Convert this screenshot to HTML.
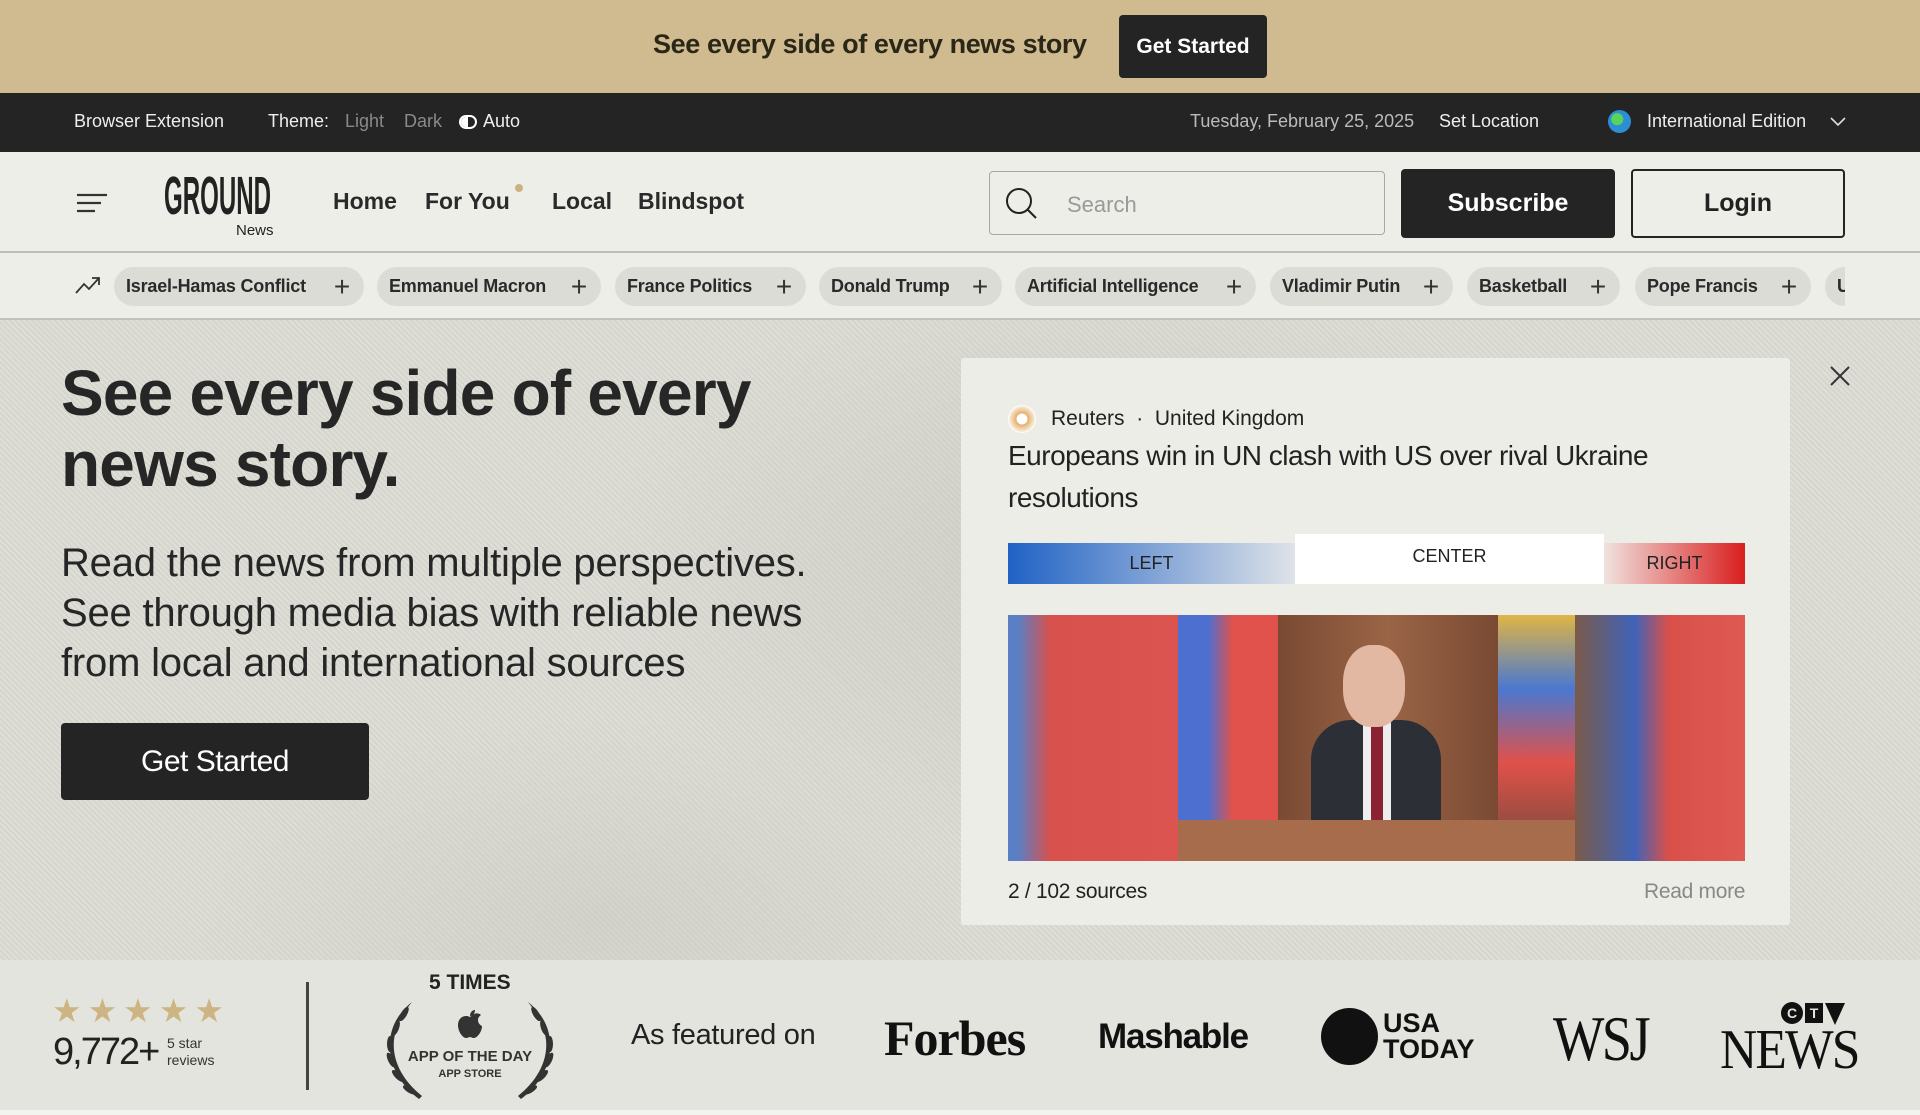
<!DOCTYPE html>
<html><head><meta charset="utf-8">
<style>
*{margin:0;padding:0;box-sizing:border-box}
body{width:1920px;height:1115px;overflow:hidden;font-family:"Liberation Sans",sans-serif;background:#e6e6e0;color:#222;position:relative}
.abs{position:absolute}
#banner{left:0;top:0;width:1920px;height:93px;background:#cfbb8f}
#dark{left:0;top:93px;width:1920px;height:59px;background:#242424;color:#eee;font-size:18px}
#nav{left:0;top:152px;width:1920px;height:101px;background:#eeeee9;border-bottom:2px solid #bdbdb8}
#topics{left:0;top:253px;width:1920px;height:67px;background:#eeeee9;border-bottom:2px solid #c2c2bc}
.pill{position:absolute;top:14px;height:39px;border-radius:20px;background:#dcdcd6;font-size:18px;font-weight:bold;color:#2a2a2a;line-height:39px;padding-left:12px;white-space:nowrap;overflow:hidden;letter-spacing:-0.2px}
.pill span.p{position:absolute;right:14px;top:0;font-weight:normal;font-size:28px;color:#333}
#hero{left:0;top:320px;width:1920px;height:640px;background:
radial-gradient(ellipse 500px 300px at 1100px 250px,rgba(190,190,182,.45),transparent),
radial-gradient(ellipse 400px 200px at 600px 600px,rgba(200,200,192,.5),transparent),
repeating-linear-gradient(45deg,rgba(255,255,255,.08) 0 2px,rgba(0,0,0,.03) 2px 4px),#dcdcd5}
#foot{left:0;top:960px;width:1920px;height:150px;background:#e4e4de}
.logo{position:absolute;color:#111}
</style></head><body>

<div id="banner" class="abs">
  <div class="abs" style="left:653px;top:29px;font-size:27px;font-weight:bold;color:#2a2718;letter-spacing:-0.4px;white-space:nowrap">See every side of every news story</div>
  <div class="abs" style="left:1119px;top:15px;width:148px;height:63px;background:#242424;border-radius:4px;color:#fff;font-size:21px;font-weight:bold;text-align:center;line-height:63px">Get Started</div>
</div>

<div id="dark" class="abs">
  <div class="abs" style="left:74px;top:18px">Browser Extension</div>
  <div class="abs" style="left:268px;top:18px">Theme:</div>
  <div class="abs" style="left:345px;top:18px;color:#8a8a8a">Light</div>
  <div class="abs" style="left:404px;top:18px;color:#8a8a8a">Dark</div>
  <div class="abs" style="left:459px;top:22px;width:18px;height:14px;border:2px solid #fff;border-radius:7px;overflow:hidden"><div style="width:7px;height:14px;background:#fff"></div></div>
  <div class="abs" style="left:483px;top:18px">Auto</div>
  <div class="abs" style="left:1190px;top:18px;color:#bbb">Tuesday, February 25, 2025</div>
  <div class="abs" style="left:1439px;top:18px">Set Location</div>
  <div class="abs" style="left:1608px;top:17px;width:23px;height:23px;border-radius:50%;background:radial-gradient(circle at 40% 40%,#5bd35b 0 30%,#2c8fd6 32%)"></div>
  <div class="abs" style="left:1647px;top:18px">International Edition</div>
  <svg class="abs" style="left:1830px;top:24px" width="16" height="10"><path d="M1 1l7 7 7-7" stroke="#ddd" stroke-width="1.6" fill="none"/></svg>
</div>

<div id="nav" class="abs">
  <svg class="abs" style="left:77px;top:41px" width="30" height="20"><path d="M0 2h30M0 10h24M0 18h18" stroke="#333" stroke-width="2.2"/></svg>
  <svg class="abs" style="left:163px;top:22px" width="112" height="64">
    <text x="1" y="40" font-family="Liberation Sans" font-weight="bold" font-size="54" textLength="107" lengthAdjust="spacingAndGlyphs" fill="#222">GROUND</text>
    <text x="73" y="61" font-family="Liberation Sans" font-size="15" fill="#222">News</text>
  </svg>
  <div class="abs" style="left:333px;top:36px;font-size:23px;font-weight:bold;color:#2a2a2a">Home</div>
  <div class="abs" style="left:425px;top:36px;font-size:23px;font-weight:bold;color:#2a2a2a">For You</div>
  <div class="abs" style="left:515px;top:32px;width:8px;height:8px;border-radius:50%;background:#cbb283"></div>
  <div class="abs" style="left:552px;top:36px;font-size:23px;font-weight:bold;color:#2a2a2a">Local</div>
  <div class="abs" style="left:638px;top:36px;font-size:23px;font-weight:bold;color:#2a2a2a">Blindspot</div>
  <div class="abs" style="left:989px;top:19px;width:396px;height:64px;border:1.5px solid #a9a9a4;border-radius:4px;background:#eeeee9"></div>
  <svg class="abs" style="left:1004px;top:34px" width="34" height="34"><circle cx="15" cy="15" r="12" stroke="#222" stroke-width="2" fill="none"/><path d="M24 24l8 8" stroke="#222" stroke-width="2"/></svg>
  <div class="abs" style="left:1067px;top:40px;font-size:22px;color:#999">Search</div>
  <div class="abs" style="left:1401px;top:17px;width:214px;height:69px;background:#242424;border-radius:4px;color:#fff;font-size:25px;font-weight:bold;text-align:center;line-height:69px">Subscribe</div>
  <div class="abs" style="left:1631px;top:17px;width:214px;height:69px;border:2px solid #242424;border-radius:4px;color:#222;font-size:25px;font-weight:bold;text-align:center;line-height:65px">Login</div>
</div>

<div id="topics" class="abs">
  <svg class="abs" style="left:75px;top:22px" width="26" height="20"><path d="M1 18l8-9 5 5 10-11M17 3h7v7" stroke="#333" stroke-width="1.8" fill="none"/></svg>
  <div class="pill" style="left:114px;width:250px">Israel-Hamas Conflict<span class="p">+</span></div>
  <div class="pill" style="left:377px;width:224px">Emmanuel Macron<span class="p">+</span></div>
  <div class="pill" style="left:615px;width:191px">France Politics<span class="p">+</span></div>
  <div class="pill" style="left:819px;width:183px">Donald Trump<span class="p">+</span></div>
  <div class="pill" style="left:1015px;width:241px">Artificial Intelligence<span class="p">+</span></div>
  <div class="pill" style="left:1270px;width:183px">Vladimir Putin<span class="p">+</span></div>
  <div class="pill" style="left:1467px;width:153px">Basketball<span class="p">+</span></div>
  <div class="pill" style="left:1635px;width:176px">Pope Francis<span class="p">+</span></div>
  <div class="pill" style="left:1825px;width:20px;border-radius:20px 0 0 20px">U</div>
</div>

<div id="hero" class="abs">
  <div class="abs" style="left:61px;top:38px;font-size:64px;font-weight:bold;line-height:71px;color:#262626;letter-spacing:-0.8px;width:900px">See every side of every<br>news story.</div>
  <div class="abs" style="left:61px;top:218px;font-size:40px;line-height:50px;color:#262626;letter-spacing:-0.2px;width:900px">Read the news from multiple perspectives.<br>See through media bias with reliable news<br>from local and international sources</div>
  <div class="abs" style="left:61px;top:403px;width:308px;height:77px;background:#242424;border-radius:4px;color:#fff;font-size:30px;text-align:center;line-height:77px;letter-spacing:-0.5px">Get Started</div>

  <div class="abs" style="left:961px;top:38px;width:829px;height:567px;background:#ededE8;border-radius:3px"></div>
  <svg class="abs" style="left:1830px;top:46px" width="20" height="20"><path d="M1 1l18 18M19 1L1 19" stroke="#333" stroke-width="2"/></svg>
  <div class="abs" style="left:1008px;top:85px;width:28px;height:28px;border-radius:50%;background:radial-gradient(circle,#fff 0 25%,#e6b070 30%,#f5e5cc 60%,#fff 70%)"></div>
  <div class="abs" style="left:1051px;top:87px;font-size:21px;color:#222">Reuters&nbsp;&nbsp;·&nbsp;&nbsp;United Kingdom</div>
  <div class="abs" style="left:1008px;top:115px;font-size:28px;line-height:42px;color:#222;letter-spacing:-0.5px;width:720px">Europeans win in UN clash with US over rival Ukraine resolutions</div>
  <div class="abs" style="left:1008px;top:223px;width:287px;height:41px;background:linear-gradient(90deg,#1f62c4,#dfe3e8);text-align:center;line-height:41px;font-size:18px;color:#222">LEFT</div>
  <div class="abs" style="left:1295px;top:214px;width:309px;height:50px;background:#fff;text-align:center;line-height:44px;font-size:18px;color:#222">CENTER</div>
  <div class="abs" style="left:1604px;top:223px;width:141px;height:41px;background:linear-gradient(90deg,#f0e2de,#d91e1e);text-align:center;line-height:41px;font-size:18px;color:#222">RIGHT</div>
  <div class="abs" style="left:1008px;top:295px;width:737px;height:246px;overflow:hidden;background:#d9534e">
    <div class="abs" style="left:0;top:0;width:170px;height:246px;background:linear-gradient(90deg,#5b7fc4 0 6%,#d8514c 25%,#dc5450)"></div>
    <div class="abs" style="left:170px;top:0;width:397px;height:246px;background:#6a3a2a"></div>
    <div class="abs" style="left:170px;top:0;width:100px;height:246px;background:linear-gradient(90deg,#4d6fd0 0 30%,#e0524b 55%)"></div>
    <div class="abs" style="left:270px;top:0;width:220px;height:246px;background:linear-gradient(90deg,#7a4a33,#9a6446,#7a4a33)"></div>
    <div class="abs" style="left:490px;top:0;width:77px;height:246px;background:linear-gradient(180deg,#e0b545 0,#4a78d0 30%,#e0514a 60%,#6a4a3a 100%)"></div>
    <div class="abs" style="left:303px;top:105px;width:130px;height:115px;background:#2d2f36;border-radius:40px 40px 0 0"></div>
    <div class="abs" style="left:355px;top:105px;width:28px;height:110px;background:#eee"></div>
    <div class="abs" style="left:363px;top:110px;width:12px;height:100px;background:#8a2233"></div>
    <div class="abs" style="left:335px;top:30px;width:62px;height:82px;border-radius:45%;background:#e2b8a2"></div>
    <div class="abs" style="left:170px;top:205px;width:397px;height:41px;background:#a66c4c"></div>
    <div class="abs" style="left:567px;top:0;width:170px;height:246px;background:linear-gradient(90deg,#7a5a4a,#3f63b8 35%,#d9504a 55%,#de5a52)"></div>
  </div>
  <div class="abs" style="left:1008px;top:560px;font-size:21px;color:#222;letter-spacing:-0.3px">2 / 102 sources</div>
  <div class="abs" style="left:1644px;top:560px;font-size:21px;color:#888;letter-spacing:-0.3px">Read more</div>
</div>

<div id="foot" class="abs">
  <div class="abs" style="left:52px;top:31px;font-size:33px;color:#cdb483;letter-spacing:6px">★★★★★</div>
  <div class="abs" style="left:53px;top:71px;font-size:38px;color:#222;letter-spacing:-2px">9,772+</div>
  <div class="abs" style="left:167px;top:75px;font-size:14px;line-height:17px;color:#333">5 star<br>reviews</div>
  <div class="abs" style="left:306px;top:22px;width:3px;height:108px;background:#444"></div>
  <div class="abs" style="left:429px;top:11px;font-size:21px;font-weight:bold;color:#222">5 TIMES</div>
  <svg class="abs" style="left:374px;top:40px" width="192" height="104">
    <g fill="#333"><path d="M38 2c-8 10-16 22-18 38-2 20 8 40 28 56l-3 3C24 83 14 62 16 40 18 22 28 10 38 2z"/>
    <ellipse cx="30" cy="14" rx="3" ry="8" transform="rotate(30 30 14)"/><ellipse cx="22" cy="28" rx="3" ry="8" transform="rotate(20 22 28)"/><ellipse cx="16" cy="44" rx="3" ry="8"/><ellipse cx="17" cy="60" rx="3" ry="8" transform="rotate(-25 17 60)"/><ellipse cx="24" cy="76" rx="3" ry="8" transform="rotate(-45 24 76)"/><ellipse cx="36" cy="90" rx="3" ry="8" transform="rotate(-60 36 90)"/>
    <path d="M154 2c8 10 16 22 18 38 2 20-8 40-28 56l3 3c21-16 31-37 29-59-2-18-12-30-22-38z"/>
    <ellipse cx="162" cy="14" rx="3" ry="8" transform="rotate(-30 162 14)"/><ellipse cx="170" cy="28" rx="3" ry="8" transform="rotate(-20 170 28)"/><ellipse cx="176" cy="44" rx="3" ry="8"/><ellipse cx="175" cy="60" rx="3" ry="8" transform="rotate(25 175 60)"/><ellipse cx="168" cy="76" rx="3" ry="8" transform="rotate(45 168 76)"/><ellipse cx="156" cy="90" rx="3" ry="8" transform="rotate(60 156 90)"/>
    <path d="M96 17c-6-3-12 1-12 8s5 13 8 13c2 0 3-1 4-1s2 1 4 1c3 0 8-6 8-12-2-1-4-3-4-6s2-4 3-5c-2-2-5-2-7-1-1 1-3 2-4 3zM96 16c0-3 2-6 5-6 0 3-2 6-5 6z"/></g>
    <text x="96" y="61" text-anchor="middle" font-family="Liberation Sans" font-weight="bold" font-size="15" fill="#333">APP OF THE DAY</text>
    <text x="96" y="77" text-anchor="middle" font-family="Liberation Sans" font-weight="bold" font-size="11" fill="#333">APP STORE</text>
  </svg>
  <div class="abs" style="left:631px;top:59px;font-size:29px;color:#222;letter-spacing:-0.3px">As featured on</div>
  <div class="logo" style="left:884px;top:49px;font-family:'Liberation Serif',serif;font-weight:bold;font-size:50px;letter-spacing:-1px">Forbes</div>
  <div class="logo" style="left:1098px;top:57px;font-weight:bold;font-size:35px;letter-spacing:-1.2px">Mashable</div>
  <div class="abs" style="left:1321px;top:48px;width:57px;height:57px;border-radius:50%;background:#111"></div>
  <div class="logo" style="left:1383px;top:50px;font-weight:bold;font-size:27px;line-height:26px;letter-spacing:0px">USA<br>TODAY</div>
  <div class="logo" style="left:1553px;top:42px;font-family:'Liberation Serif',serif;font-size:64px;letter-spacing:-3px;transform:scaleX(0.85);transform-origin:left">WSJ</div>
  <div class="abs" style="left:1781px;top:42px;width:22px;height:22px;border-radius:50%;background:#111;color:#e4e4de;font-size:14px;font-weight:bold;text-align:center;line-height:22px">C</div>
  <div class="abs" style="left:1805px;top:43px;width:18px;height:20px;background:#111;color:#e4e4de;font-size:14px;font-weight:bold;text-align:center;line-height:20px">T</div>
  <svg class="abs" style="left:1825px;top:43px" width="20" height="22"><path d="M0 0h20L10 22z" fill="#111"/></svg>
  <div class="logo" style="left:1720px;top:58px;font-family:'Liberation Serif',serif;font-size:56px;letter-spacing:-2px;transform:scaleX(0.92);transform-origin:left">NEWS</div>
</div>
<div class="abs" style="left:0;top:1110px;width:1920px;height:5px;background:#f2f2ee"></div>
</body></html>
